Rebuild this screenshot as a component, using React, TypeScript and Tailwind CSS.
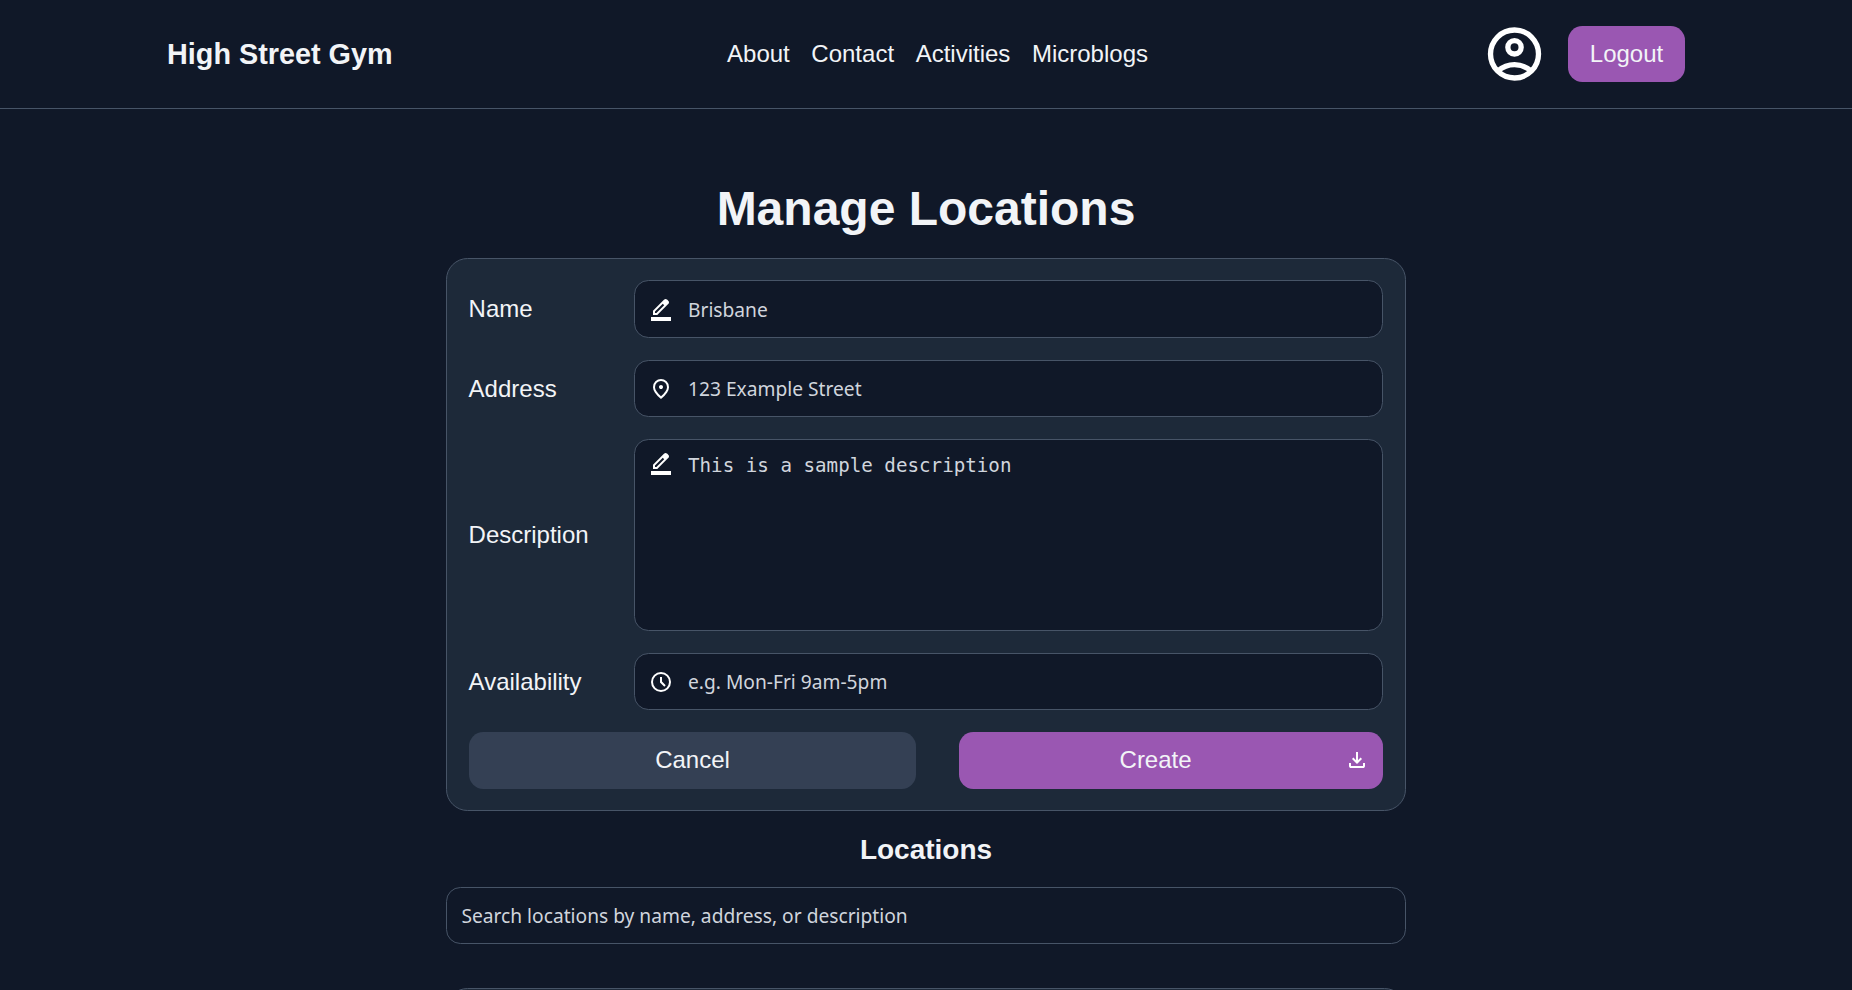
import React from "react";

const paths = {
  edit: "M80 0v-160h800V0H80Zm160-320h56l312-311-29-29-28-28-311 312v56Zm-80 80v-170l448-447q11-11 25.5-17t30.5-6q16 0 31 6t27 18l55 56q12 11 17.5 26t5.5 31q0 15-5.5 29.5T777-687L330-240H160Z",
  pin: "M480-480q33 0 56.5-23.5T560-560q0-33-23.5-56.5T480-640q-33 0-56.5 23.5T400-560q0 33 23.5 56.5T480-480Zm0 294q122-112 181-203.5T720-552q0-109-69.5-178.5T480-800q-101 0-170.5 69.5T240-552q0 71 59 162.5T480-186Zm0 106Q319-217 239.5-334.5T160-552q0-150 96.5-239T480-880q127 0 223.5 89T800-552q0 100-79.5 217.5T480-80Z",
  clock: "m612-292 56-56-148-148v-184h-80v216l172 172ZM480-80a400 400 0 1 1 0-800 400 400 0 0 1 0 800Zm0-80a320 320 0 1 0 0-640 320 320 0 0 0 0 640Z",
  download: "M480-320 280-520l56-58 104 104v-326h80v326l104-104 56 58-200 200ZM240-160q-33 0-56.5-23.5T160-240v-120h80v120h480v-120h80v120q0 33-23.5 56.5T720-160H240Z",
};

function Icon({ d, className = "" }: { d: string; className?: string }) {
  return (
    <svg className={"size-6 shrink-0 fill-white " + className} viewBox="0 -960 960 960">
      <path d={d} />
    </svg>
  );
}

function AccountIcon() {
  return (
    <svg className="size-16" viewBox="-0.19 0 24 24" fill="none" stroke="#fff" strokeWidth="2">
      <circle cx="12" cy="12" r="9" />
      <circle cx="12" cy="9.5" r="2.5" />
      <path d="M5.7 18.4C7.5 16.9 9.6 16 12 16s4.500 .9 6.300 2.400" />
    </svg>
  );
}

const field =
  "flex items-center rounded-[14.4px] border border-[#475467] bg-[#101828] font-['Noto_Sans',sans-serif] text-[19.2px]";
const input = "h-full min-w-0 flex-1 bg-transparent pl-[15px] outline-none placeholder:text-[#d0d5dd]";

export default function App() {
  return (
    <div className="h-[990px] overflow-hidden bg-[#101828] font-['Liberation_Sans',sans-serif] text-[24px] leading-[28px] text-[#f2f4f7]">
      <header className="flex h-[109px] items-center justify-between border-b border-[#475467] px-[167px]">
        <div className="text-[28.8px] font-bold">High Street Gym</div>
        <nav className="flex gap-[21.6px]">
          <a>About</a>
          <a>Contact</a>
          <a>Activities</a>
          <a>Microblogs</a>
        </nav>
        <div className="flex items-center gap-[21.6px]">
          <AccountIcon />
          <button className="h-14 w-[117px] rounded-[14.4px] bg-[#9a57b2]">Logout</button>
        </div>
      </header>
      <main className="mx-auto w-[960px]">
        <h1 className="pt-[72px] text-center text-[48px] leading-[56px] font-bold">Manage Locations</h1>
        <form className="mt-[21px] flex h-[553px] flex-col rounded-[21.6px] border border-[#475467] bg-[#1d2939] pt-[21px] pr-[22px] pl-[21.6px]">
          <div className="grid grid-cols-[165.4px_749px] grid-rows-[58px_57px_192px_57px] items-center gap-y-[22px]">
            <label>Name</label>
            <div className={field + " h-full pl-[14px]"}>
              <Icon d={paths.edit} />
              <input className={input} placeholder="Brisbane" />
            </div>
            <label>Address</label>
            <div className={field + " h-full pl-[14px]"}>
              <Icon d={paths.pin} className="mt-px" />
              <input className={input} placeholder="123 Example Street" />
            </div>
            <label>Description</label>
            <div className={field + " h-full pt-[11px] pl-[14px]"}>
              <Icon d={paths.edit} className="self-start" />
              <textarea
                className="h-full min-w-0 flex-1 resize-none bg-transparent pt-0.5 pl-[15px] font-['DejaVu_Sans_Mono',monospace] text-[19.2px] leading-[26px] outline-none placeholder:text-[#d0d5dd]"
                placeholder="This is a sample description"
              />
            </div>
            <label>Availability</label>
            <div className={field + " h-full pl-[14px]"}>
              <Icon d={paths.clock} className="mt-px" />
              <input className={input} placeholder="e.g. Mon-Fri 9am-5pm" />
            </div>
          </div>
          <div className="mt-[22px] flex gap-[42.6px] pl-[0.4px]">
            <button type="button" className="h-[57px] w-[447px] rounded-[14.4px] bg-[#344054] pb-px">
              Cancel
            </button>
            <button type="button" className="flex h-[57px] w-[424px] items-center rounded-[14.4px] bg-[#9a57b2] pr-[14px] pb-px">
              <span className="flex-1 pl-[8px]">Create</span>
              <Icon d={paths.download} />
            </button>
          </div>
        </form>
        <h2 className="mt-[22px] text-center text-[28px] leading-[33px] font-bold">Locations</h2>
        <div className={field + " mt-[21px] h-[57px] pl-[14.4px]"}>
          <input className="h-full flex-1 bg-transparent outline-none placeholder:text-[#d0d5dd]" placeholder="Search locations by name, address, or description" />
        </div>
        <section className="mt-[44px] h-[200px] rounded-[21.6px] border border-[#475467] bg-[#1d2939]" />
      </main>
    </div>
  );
}
